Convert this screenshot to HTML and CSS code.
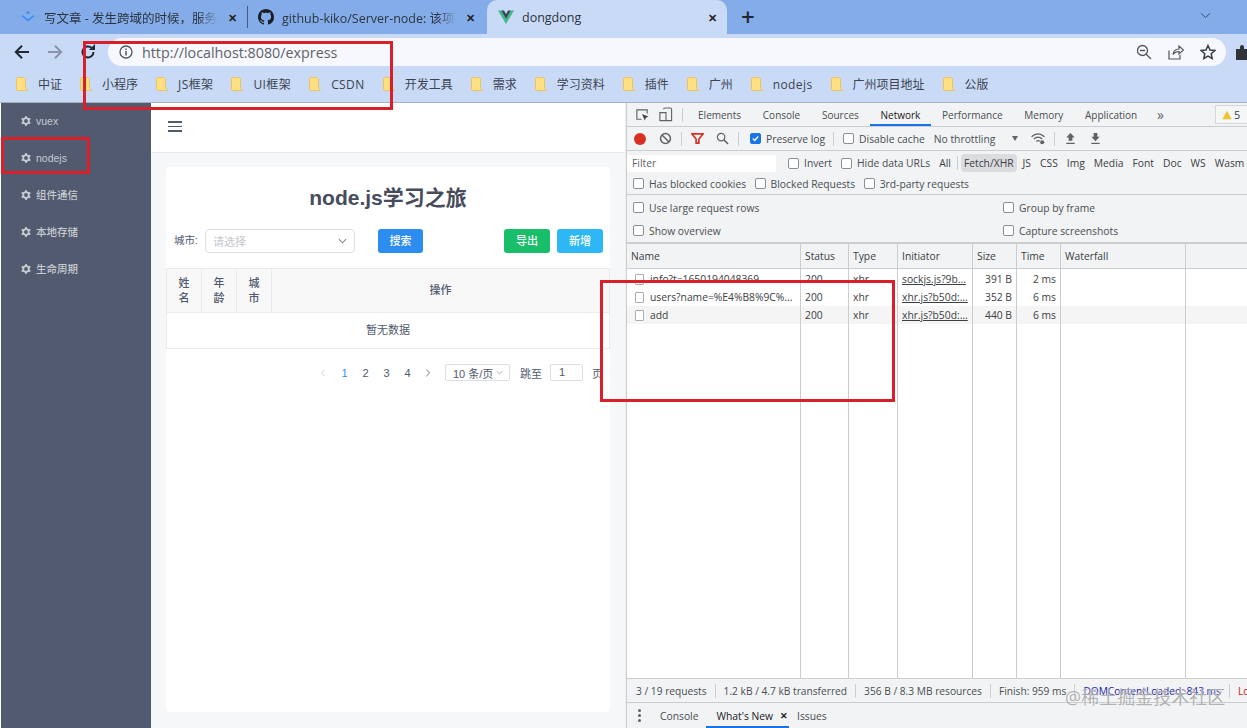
FILE: index.html
```html
<!DOCTYPE html>
<html lang="zh">
<head>
    <meta charset="UTF-8">
    <meta name="viewport" content="width=device-width, initial-scale=1.0">
    <title>dongdong</title>
    <link rel="stylesheet" href="styles.css">
</head>
<body>
    <svg class="defs" width="0" height="0">
        <symbol id="folder" viewBox="0 0 12 14">
            <path d="M.5 1.5Q.5.5 1.5.5H8L9.5 2V11L11.5 13.5H1.5Q.5 13.5.5 12.5Z" fill="#ffdf80" stroke="#e8c468"/>
        </symbol>
        <symbol id="gear" viewBox="0 0 12 12">
            <circle cx="6" cy="6" r="3.4" fill="none" stroke="#c9ccd3" stroke-width="2.2"/>
            <path d="M6 0V2.4M6 9.6V12M.8 3 2.9 4.2M9.1 7.8 11.2 9M.8 9 2.9 7.8M9.1 4.2 11.2 3" stroke="#c9ccd3" stroke-width="2"/>
        </symbol>
    </svg>

    <div class="tabstrip">
        <div class="tab tab-first">
            <svg class="favicon" viewBox="0 0 16 16"><path d="M8 2 10 3.600 8 5.200 6 3.600ZM3 6 8 10 13 6 14.400 7.200 8 12.400 1.600 7.200Z" fill="#3f8cf5"/><path d="M4.400 5 8 7.900 11.600 5 13 6.100 8 10 3 6.100Z" fill="#7fb2f7"/></svg>
            <span class="tab-title tab-fade">写文章 - 发生跨域的时候，服务器</span>
            <span class="tab-close">✕</span>
        </div>
        <div class="tab-sep"></div>
        <div class="tab tab-second">
            <svg class="favicon" viewBox="0 0 16 16"><path fill="#1b1f24" d="M8 0C3.58 0 0 3.58 0 8c0 3.54 2.29 6.53 5.47 7.59.4.07.55-.17.55-.38 0-.19-.01-.82-.01-1.49-2.01.37-2.53-.49-2.69-.94-.09-.23-.48-.94-.82-1.13-.28-.15-.68-.52-.01-.53.63-.01 1.08.58 1.23.82.72 1.21 1.87.87 2.33.66.07-.52.28-.87.51-1.07-1.78-.2-3.64-.89-3.64-3.95 0-.87.31-1.59.82-2.15-.08-.2-.36-1.02.08-2.12 0 0 .67-.21 2.2.82.64-.18 1.32-.27 2-.27s1.36.09 2 .27c1.53-1.04 2.2-.82 2.2-.82.44 1.1.16 1.92.08 2.12.51.56.82 1.27.82 2.15 0 3.07-1.87 3.75-3.65 3.95.29.25.54.73.54 1.48 0 1.07-.01 1.93-.01 2.2 0 .21.15.46.55.38A8.01 8.01 0 0 0 16 8c0-4.42-3.58-8-8-8Z"/></svg>
            <span class="tab-title tab-fade">github-kiko/Server-node: 该项</span>
            <span class="tab-close">✕</span>
        </div>
        <div class="tab tab-active">
            <svg class="favicon" viewBox="0 0 16 16"><path d="M0 1.500H3.200L8 10 12.800 1.500H16L8 15Z" fill="#41b883"/><path d="M3.200 1.500H6L8 5 10 1.500H12.800L8 10Z" fill="#35495e"/></svg>
            <span class="tab-title">dongdong</span>
            <span class="tab-close">✕</span>
        </div>
        <span class="new-tab">+</span>
        <svg class="tab-menu" viewBox="0 0 12 8"><path d="M1 1.500 6 6.500 11 1.500" fill="none" stroke="#2c3e5c" stroke-width="1"/></svg>
    </div>

    <div class="toolbar">
        <svg class="nav-icon" viewBox="0 0 16 16"><path d="M15 8H2M8 1.800 1.800 8 8 14.200" fill="none" stroke="#1f2733" stroke-width="2"/></svg>
        <svg class="nav-icon" viewBox="0 0 16 16"><path d="M1 8H14M8 1.800 14.200 8 8 14.200" fill="none" stroke="#8a94a6" stroke-width="2"/></svg>
        <svg class="nav-icon" viewBox="0 0 16 16"><path d="M13.500 8A5.500 5.500 0 1 1 11.600 3.800" fill="none" stroke="#1f2733" stroke-width="2"/><path d="M9 6H15V0Z" fill="#1f2733"/></svg>
        <div class="omnibox">
            <svg class="info-icon" viewBox="0 0 14 14"><circle cx="7" cy="7" r="6" fill="none" stroke="#50545c" stroke-width="1.300"/><path d="M7 6V10.500M7 3.400V5" stroke="#50545c" stroke-width="1.500"/></svg>
            <span class="url">http://localhost:8080/express</span>
            <div class="omni-actions">
                <svg class="omni-icon" viewBox="0 0 16 16"><circle cx="6.500" cy="6.500" r="5" fill="none" stroke="#50545c" stroke-width="1.300"/><path d="M10.200 10.200 15 15M4 6.500H9" stroke="#50545c" stroke-width="1.300"/></svg>
                <svg class="omni-icon" viewBox="0 0 16 16"><path d="M1 6.500V15H12V11M5 10.500C5.500 7 8 5 11 5V2L15.500 6 11 10V7.500C8.500 7.500 6.500 8.500 5 10.500Z" fill="none" stroke="#50545c" stroke-width="1.200"/></svg>
                <svg class="omni-icon" viewBox="0 0 16 16"><path d="M8 1.500 10 6 14.800 6.500 11.200 9.700 12.200 14.500 8 12 3.800 14.500 4.800 9.700 1.200 6.500 6 6Z" fill="none" stroke="#3a3f47" stroke-width="1.500"/></svg>
            </div>
        </div>
        <svg class="puzzle" viewBox="0 0 16 16"><path d="M1 5H5V3A2 2 0 0 1 9 3V5H13V9H15A2 2 0 0 1 15 13H13V16H1Z" fill="#30343a"/></svg>
    </div>

    <div class="bookmarks">
        <a class="bookmark"><svg class="folder"><use href="#folder"/></svg>中证</a>
        <a class="bookmark"><svg class="folder"><use href="#folder"/></svg>小程序</a>
        <a class="bookmark bookmark-latin"><svg class="folder"><use href="#folder"/></svg>JS框架</a>
        <a class="bookmark bookmark-latin"><svg class="folder"><use href="#folder"/></svg>UI框架</a>
        <a class="bookmark bookmark-latin"><svg class="folder"><use href="#folder"/></svg>CSDN</a>
        <a class="bookmark"><svg class="folder"><use href="#folder"/></svg>开发工具</a>
        <a class="bookmark"><svg class="folder"><use href="#folder"/></svg>需求</a>
        <a class="bookmark"><svg class="folder"><use href="#folder"/></svg>学习资料</a>
        <a class="bookmark"><svg class="folder"><use href="#folder"/></svg>插件</a>
        <a class="bookmark"><svg class="folder"><use href="#folder"/></svg>广州</a>
        <a class="bookmark bookmark-latin"><svg class="folder"><use href="#folder"/></svg>nodejs</a>
        <a class="bookmark"><svg class="folder"><use href="#folder"/></svg>广州项目地址</a>
        <a class="bookmark"><svg class="folder"><use href="#folder"/></svg>公版</a>
    </div>

    <div class="viewport">
        <nav class="sidebar">
            <a class="side-item"><svg class="gear"><use href="#gear"/></svg>vuex</a>
            <a class="side-item"><svg class="gear"><use href="#gear"/></svg>nodejs</a>
            <a class="side-item"><svg class="gear"><use href="#gear"/></svg>组件通信</a>
            <a class="side-item"><svg class="gear"><use href="#gear"/></svg>本地存储</a>
            <a class="side-item"><svg class="gear"><use href="#gear"/></svg>生命周期</a>
        </nav>

        <main class="app">
            <div class="app-top">
                <div class="hamburger"><i></i><i></i><i></i></div>
            </div>
            <div class="app-body">
                <div class="card">
                    <h1 class="title">node.js学习之旅</h1>
                    <div class="filters">
                        <label class="filter-label">城市:</label>
                        <div class="select">
                            <span>请选择</span>
                            <svg class="caret" viewBox="0 0 10 6"><path d="M1 1 5 5 9 1" fill="none" stroke="#808695" stroke-width="1.200"/></svg>
                        </div>
                        <button class="btn btn-search">搜索</button>
                        <button class="btn btn-export">导出</button>
                        <button class="btn btn-add">新增</button>
                    </div>
                    <div class="table">
                        <div class="th">姓<br>名</div>
                        <div class="th">年<br>龄</div>
                        <div class="th">城<br>市</div>
                        <div class="th th-last">操作</div>
                        <div class="empty">暂无数据</div>
                    </div>
                    <div class="pager">
                        <svg class="pager-arrow" viewBox="0 0 6 10"><path d="M5 1 1 5 5 9" fill="none" stroke="#c5c8ce" stroke-width="1.100"/></svg>
                        <span class="page page-on">1</span>
                        <span class="page">2</span>
                        <span class="page">3</span>
                        <span class="page">4</span>
                        <svg class="pager-arrow pager-next" viewBox="0 0 6 10"><path d="M1 1 5 5 1 9" fill="none" stroke="#666" stroke-width="1.100"/></svg>
                        <div class="page-size">10 条/页<svg class="caret-small" viewBox="0 0 10 6"><path d="M1 1 5 5 9 1" fill="none" stroke="#808695" stroke-width="1"/></svg></div>
                        <span class="jump">跳至</span>
                        <div class="jump-input">1</div>
                        <span class="jump-end">页</span>
                    </div>
                </div>
            </div>
        </main>

        <section class="devtools">
            <div class="dt-tabs">
                <svg class="dt-icon" viewBox="0 0 16 16"><path d="M7 13H2V3H13V7" fill="none" stroke="#5f6368" stroke-width="1.200"/><path d="M7.500 7.500 14.500 10.500 11.500 11.500 10.500 14.500Z" fill="#3d4043"/></svg>
                <svg class="dt-icon" viewBox="0 0 16 16"><path d="M6 2.500Q6 1 7.500 1H13Q14.500 1 14.500 2.500V14.500H6M2 6H8.500V14.500H2Z" fill="none" stroke="#5f6368" stroke-width="1.200"/></svg>
                <span class="dt-sep"></span>
                <span class="dt-tab">Elements</span>
                <span class="dt-tab">Console</span>
                <span class="dt-tab">Sources</span>
                <span class="dt-tab dt-tab-on">Network</span>
                <span class="dt-tab">Performance</span>
                <span class="dt-tab">Memory</span>
                <span class="dt-tab">Application</span>
                <span class="dt-more">»</span>
                <span class="dt-badge"><svg class="warn" viewBox="0 0 12 12"><path d="M6 1 11.500 11H.5Z" fill="#f4c430"/></svg>5</span>
            </div>

            <div class="dt-row dt-actions">
                <span class="rec"></span>
                <svg class="dt-icon-sm" viewBox="0 0 14 14"><circle cx="7" cy="7" r="5.300" fill="none" stroke="#5f6368" stroke-width="1.600"/><path d="M3.300 3.300 10.700 10.700" stroke="#5f6368" stroke-width="1.600"/></svg>
                <span class="dt-sep"></span>
                <svg class="dt-icon-sm" viewBox="0 0 14 14"><path d="M1 2H13L8.500 7.500V12H5.500V7.500Z" fill="none" stroke="#d93025" stroke-width="1.800"/></svg>
                <svg class="dt-icon-sm" viewBox="0 0 14 14"><circle cx="5.500" cy="5.500" r="4" fill="none" stroke="#5f6368" stroke-width="1.300"/><path d="M8.500 8.500 13 13" stroke="#5f6368" stroke-width="1.600"/></svg>
                <span class="dt-sep"></span>
                <label class="chk chk-preserve"><i class="box box-on"><svg viewBox="0 0 10 10"><path d="M2 5 4.200 7.200 8 2.800" fill="none" stroke="#fff" stroke-width="1.500"/></svg></i>Preserve log</label>
                <span class="dt-sep"></span>
                <label class="chk"><i class="box"></i>Disable cache</label>
                <span class="throttle">No throttling</span>
                <span class="throttle-arrow"></span>
                <svg class="dt-icon-sm wifi" viewBox="0 0 16 14"><path d="M1 5Q8-1 15 5M3.500 7.500Q8 3.500 12.500 7.500M6 10Q8 8.500 10 10" fill="none" stroke="#5f6368" stroke-width="1.400"/><circle cx="12.500" cy="11" r="2.200" fill="#5f6368"/></svg>
                <span class="dt-sep"></span>
                <svg class="dt-icon-sm" viewBox="0 0 12 14"><path d="M6 1 10.500 6H8V9.500H4V6H1.500ZM1.500 11.500H10.500V13H1.500Z" fill="#5f6368"/></svg>
                <svg class="dt-icon-sm" viewBox="0 0 12 14"><path d="M4 1H8V5H10.500L6 10 1.500 5H4ZM1.500 11.500H10.500V13H1.500Z" fill="#5f6368"/></svg>
            </div>

            <div class="dt-row dt-filter">
                <span class="filter-input">Filter</span>
                <label class="chk"><i class="box"></i>Invert</label>
                <label class="chk"><i class="box"></i>Hide data URLs</label>
                <span class="ftype ftype-all">All</span>
                <span class="dt-sep"></span>
                <span class="ftype ftype-on">Fetch/XHR</span>
                <span class="ftype">JS</span>
                <span class="ftype">CSS</span>
                <span class="ftype">Img</span>
                <span class="ftype">Media</span>
                <span class="ftype">Font</span>
                <span class="ftype">Doc</span>
                <span class="ftype">WS</span>
                <span class="ftype">Wasm</span>
            </div>

            <div class="dt-row dt-blocked">
                <label class="chk"><i class="box"></i>Has blocked cookies</label>
                <label class="chk"><i class="box"></i>Blocked Requests</label>
                <label class="chk"><i class="box"></i>3rd-party requests</label>
            </div>

            <div class="dt-settings">
                <label class="chk"><i class="box"></i>Use large request rows</label>
                <label class="chk"><i class="box"></i>Group by frame</label>
                <label class="chk"><i class="box"></i>Show overview</label>
                <label class="chk"><i class="box"></i>Capture screenshots</label>
            </div>

            <div class="net">
                <div class="net-row net-head">
                    <span class="c-name">Name</span>
                    <span class="c-status">Status</span>
                    <span class="c-type">Type</span>
                    <span class="c-init">Initiator</span>
                    <span class="c-size c-left">Size</span>
                    <span class="c-time c-left">Time</span>
                    <span class="c-fall">Waterfall</span>
                </div>
                <div class="net-row net-first">
                    <span class="c-name"><i class="file"></i>info?t=1650194048369</span>
                    <span class="c-status">200</span>
                    <span class="c-type">xhr</span>
                    <span class="c-init link">sockjs.js?9b...</span>
                    <span class="c-size">391 B</span>
                    <span class="c-time">2 ms</span>
                    <span class="c-fall"></span>
                </div>
                <div class="net-row net-white">
                    <span class="c-name"><i class="file"></i>users?name=%E4%B8%9C%...</span>
                    <span class="c-status">200</span>
                    <span class="c-type">xhr</span>
                    <span class="c-init link">xhr.js?b50d:...</span>
                    <span class="c-size">352 B</span>
                    <span class="c-time">6 ms</span>
                    <span class="c-fall"></span>
                </div>
                <div class="net-row">
                    <span class="c-name"><i class="file"></i>add</span>
                    <span class="c-status">200</span>
                    <span class="c-type">xhr</span>
                    <span class="c-init link">xhr.js?b50d:...</span>
                    <span class="c-size">440 B</span>
                    <span class="c-time">6 ms</span>
                    <span class="c-fall"></span>
                </div>
                <div class="net-row net-fill">
                    <span class="c-name"></span>
                    <span class="c-status"></span>
                    <span class="c-type"></span>
                    <span class="c-init"></span>
                    <span class="c-size"></span>
                    <span class="c-time"></span>
                    <span class="c-fall"></span>
                </div>
            </div>

            <div class="dt-status">
                <span>3 / 19 requests</span>
                <span>1.2 kB / 4.7 kB transferred</span>
                <span>356 B / 8.3 MB resources</span>
                <span>Finish: 959 ms</span>
                <span class="st-blue">DOMContentLoaded: 843 ms</span>
                <span class="st-red">Lo</span>
            </div>

            <div class="dt-drawer">
                <span class="kebab"><i></i><i></i><i></i></span>
                <span class="dr-tab">Console</span>
                <span class="dr-tab dr-tab-on">What's New <b class="dr-x">✕</b></span>
                <span class="dr-tab">Issues</span>
            </div>
        </section>
    </div>

    <!-- red marks drawn over the screenshot, and the site watermark -->
    <div class="mark mark-url"></div>
    <div class="mark mark-side"></div>
    <div class="mark mark-net"></div>
    <div class="watermark">@稀土掘金技术社区</div>
</body>
</html>
```

FILE: styles.css
```css
* {
    box-sizing: border-box;
}
html, body {
    margin: 0;
    height: 728px;
    overflow: hidden;
}
body {
    position: relative;
    font-family: "Open Sans", "Noto Sans CJK SC", sans-serif;
    background: #c9daf6;
    color: #333;
}
.defs {
    position: absolute;
}

/* browser chrome */
.tabstrip {
    display: flex;
    align-items: flex-end;
    height: 34px;
    background: #84ace8;
}
.tab {
    display: flex;
    align-items: center;
    width: 238px;
    height: 34px;
    padding: 0 9px 0 10px;
    font-size: 12.5px;
    color: #2c3440;
}
.tab-first {
    width: 247px;
    padding-left: 20px;
    padding-right: 8px;
}
.tab-sep {
    width: 1px;
    height: 22px;
    margin-bottom: 6px;
    background: #46597a;
}
.tab-active {
    width: 240px;
    height: 37px;
    margin-bottom: -3px;
    padding: 0 8px 3px 11px;
    margin-left: 1px;
    background: #c9daf6;
    border-radius: 10px 10px 0 0;
}
.favicon {
    flex: none;
    width: 16px;
    height: 16px;
    margin-right: 8px;
}
.tab-title {
    flex: 1;
    overflow: hidden;
    white-space: nowrap;
}
.tab-fade {
    -webkit-mask-image: linear-gradient(to right, #000 88%, transparent);
    mask-image: linear-gradient(to right, #000 88%, transparent);
}
.tab-close {
    flex: none;
    width: 14px;
    margin-left: 6px;
    font-size: 11px;
    font-weight: 700;
    color: #222;
    text-align: center;
}
.new-tab {
    align-self: center;
    margin-left: 14px;
    font-size: 24px;
    line-height: 24px;
    font-weight: 600;
    color: #1f2733;
}
.tab-menu {
    align-self: center;
    width: 11px;
    height: 7px;
    margin-left: auto;
    margin-right: 36px;
    margin-bottom: 4px;
}

.toolbar {
    display: flex;
    align-items: center;
    height: 32px;
    padding: 4px 0 0 14px;
    background: #c9daf6;
}
.nav-icon {
    flex: none;
    width: 16px;
    height: 16px;
    margin-right: 17px;
}
.omnibox {
    flex: none;
    display: flex;
    align-items: center;
    width: 1118px;
    height: 28px;
    margin-left: -5px;
    padding: 0 10px 0 11px;
    background: #f6f8fe;
    border-radius: 14px;
}
.info-icon {
    width: 14px;
    height: 14px;
    margin-right: 9px;
}
.url {
    font-size: 14.3px;
    color: #5f6368;
}
.omni-actions {
    display: flex;
    gap: 16px;
    margin-left: auto;
}
.omni-icon {
    width: 16px;
    height: 16px;
}
.puzzle {
    flex: none;
    width: 16px;
    height: 16px;
    margin-left: 9px;
}

.bookmarks {
    display: flex;
    align-items: center;
    gap: 18px;
    height: 37px;
    padding-left: 16px;
    background: #c9daf6;
    border-bottom: 1px solid #a7afbc;
}
.bookmark {
    display: flex;
    align-items: center;
    gap: 10px;
    font-size: 12px;
    color: #3b4250;
    white-space: nowrap;
}
.bookmark-latin {
    letter-spacing: 0.4px;
}
.folder {
    width: 12px;
    height: 14px;
}

/* page + devtools */
.viewport {
    display: flex;
    height: 625px;
    padding-left: 1px;
    background: #fff;
}
.sidebar {
    flex: none;
    width: 150px;
    background: #515a6e;
}
.side-item {
    display: flex;
    align-items: center;
    gap: 5px;
    height: 36.8px;
    padding-left: 20px;
    font-family: "Liberation Sans", "Noto Sans CJK SC", sans-serif;
    font-size: 10.5px;
    font-weight: 500;
    color: #c7cad1;
}
.gear {
    width: 10px;
    height: 10px;
}
.app {
    flex: none;
    width: 475px;
    display: flex;
    flex-direction: column;
    font-family: "Liberation Sans", "Noto Sans CJK SC", sans-serif;
    background: #f5f7f9;
    border-right: 1px solid #f0f0f0;
}
.app-top {
    display: flex;
    align-items: center;
    height: 50px;
    padding: 0 0 2px 17px;
    background: #fff;
    border-bottom: 1px solid #e8eaec;
}
.hamburger {
    display: flex;
    flex-direction: column;
    gap: 3px;
}
.hamburger i {
    width: 14px;
    height: 1.5px;
    background: #515a6e;
}
.app-body {
    flex: 1;
    padding: 14px 15px 16px 15px;
}
.card {
    height: 100%;
    background: #fff;
    border-radius: 4px;
}
.title {
    margin: 0;
    padding-top: 18px;
    font-size: 21px;
    line-height: 26px;
    font-weight: 700;
    text-align: center;
    color: #464c5b;
}
.filters {
    display: flex;
    align-items: center;
    height: 24px;
    margin-top: 18px;
    padding: 0 7px 0 8px;
}
.filter-label {
    width: 31px;
    margin-bottom: 3px;
    font-size: 10.5px;
    color: #515a6e;
}
.select {
    display: flex;
    align-items: center;
    justify-content: space-between;
    width: 150px;
    height: 24px;
    padding: 0 7px;
    font-size: 11px;
    color: #c5c8ce;
    border: 1px solid #dcdee2;
    border-radius: 4px;
}
.caret {
    width: 9px;
    height: 6px;
}
.btn {
    height: 24px;
    padding: 0 0 2px;
    font-family: inherit;
    font-size: 11px;
    font-weight: 500;
    color: #fff;
    border: none;
    border-radius: 3px;
}
.btn-search {
    width: 45px;
    margin-left: 23px;
    margin-right: auto;
    background: #2d8cf0;
}
.btn-export {
    width: 46px;
    background: #19be6b;
}
.btn-add {
    width: 46px;
    margin-left: 7px;
    background: #2db7f5;
}
.table {
    display: grid;
    grid-template-columns: 35px 35px 35px 1fr;
    margin-top: 15px;
    border: 1px solid #e8eaec;
    font-size: 11px;
    color: #515a6e;
}
.th {
    display: flex;
    align-items: center;
    justify-content: center;
    height: 44px;
    line-height: 15px;
    text-align: center;
    font-weight: 500;
    background: #f8f8f9;
    border-right: 1px solid #e8eaec;
    border-bottom: 1px solid #e8eaec;
}
.th-last {
    border-right: none;
}
.empty {
    grid-column: 1 / -1;
    height: 35px;
    line-height: 35px;
    text-align: center;
}
.pager {
    display: flex;
    align-items: center;
    height: 17px;
    margin-top: 15px;
    padding-left: 154px;
    font-size: 11px;
    color: #515a6e;
    white-space: nowrap;
}
.pager-arrow {
    width: 6px;
    height: 8px;
}
.page {
    width: 21px;
    text-align: center;
}
.page-on {
    margin-left: 8px;
    color: #2d8cf0;
}
.pager-next {
    margin-left: 7px;
}
.page-size {
    display: flex;
    align-items: center;
    gap: 3px;
    width: 65px;
    height: 17px;
    margin-left: 14px;
    padding-left: 7px;
    border: 1px solid #dcdee2;
    border-radius: 2px;
}
.caret-small {
    width: 7px;
    height: 5px;
}
.jump {
    margin-left: 10px;
}
.jump-input {
    width: 33px;
    height: 17px;
    margin-left: 8px;
    padding-left: 8px;
    line-height: 15px;
    border: 1px solid #dcdee2;
    border-radius: 2px;
}
.jump-end {
    margin-left: 9px;
}

/* devtools */
.devtools {
    flex: none;
    display: flex;
    flex-direction: column;
    width: 621px;
    height: 625px;
    overflow: hidden;
    background: #f1f3f4;
    border-left: 1px solid #cbcdd1;
    font-size: 10.3px;
    color: #3c4043;
    white-space: nowrap;
}
.dt-tabs {
    display: flex;
    align-items: center;
    height: 24px;
    padding-left: 8px;
    border-bottom: 1px solid #cbcdd1;
    font-size: 10px;
}
.dt-icon {
    flex: none;
    width: 15px;
    height: 15px;
    margin-right: 8px;
}
.dt-sep {
    flex: none;
    width: 1px;
    height: 14px;
    margin: 0 4.2px 0 1px;
    background: #cbcdd1;
}
.dt-tab {
    display: flex;
    align-items: center;
    height: 23px;
    padding: 0 10.87px;
    color: #4a4e52;
}
.dt-tab-on {
    color: #202124;
    box-shadow: inset 0 -2px 0 #1a73e8;
}
.dt-more {
    margin-left: 9px;
    font-size: 14px;
    line-height: 14px;
    color: #5f6368;
}
.dt-badge {
    display: flex;
    align-items: center;
    gap: 2px;
    flex: none;
    width: 36px;
    height: 19px;
    margin-left: auto;
    margin-right: -4px;
    padding-left: 6px;
    background: #f4f6f7;
    border: 1px solid #d5d7da;
    font-size: 11px;
}
.warn {
    width: 10px;
    height: 10px;
}
.dt-row {
    display: flex;
    align-items: center;
    padding-left: 7px;
}
.dt-actions {
    height: 24px;
    border-bottom: 1px solid #cbcdd1;
}
.rec {
    flex: none;
    width: 12px;
    height: 12px;
    margin-right: 13px;
    background: #d93025;
    border-radius: 50%;
}
.dt-icon-sm {
    flex: none;
    width: 13px;
    height: 13px;
    margin-right: 12px;
}
.dt-actions .dt-sep {
    margin: 0 9px 0 -3px;
}
.chk {
    display: flex;
    align-items: center;
    gap: 5px;
    color: #4a4e52;
}
.box {
    flex: none;
    display: block;
    width: 11px;
    height: 11px;
    background: #fff;
    border: 1px solid #8a8f95;
    border-radius: 2px;
}
.box-on {
    background: #1a73e8;
    border-color: #1a73e8;
}
.box-on svg {
    display: block;
    width: 9px;
    height: 9px;
}
.dt-actions .chk {
    margin-right: 11px;
}
.dt-actions .chk-preserve {
    margin-left: 2px;
}
.throttle {
    margin-left: -2px;
    color: #4a4e52;
}
.throttle-arrow {
    width: 0;
    height: 0;
    margin: 0 12px 0 17px;
    border-left: 3.5px solid transparent;
    border-right: 3.5px solid transparent;
    border-top: 5px solid #5f6368;
}
.wifi {
    width: 16px;
    margin-right: 11px;
}
.dt-filter {
    height: 22px;
    padding-left: 0;
    padding-top: 2px;
}
.filter-input {
    flex: none;
    width: 149px;
    height: 17px;
    margin-right: 12px;
    padding-left: 5px;
    line-height: 17px;
    background: #fff;
    color: #5f6368;
}
.dt-filter .chk {
    margin-right: 9px;
}
.ftype {
    margin-right: 9px;
}
.ftype-all {
    margin-right: 6px;
}
.dt-filter .dt-sep {
    margin: 0 3px 0 0;
}
.ftype-on {
    margin-right: 6px;
    padding: 2px 3px;
    background: #dadce0;
    border-radius: 4px;
}
.dt-blocked {
    gap: 8.5px;
    height: 22px;
    padding-left: 6px;
    border-bottom: 1px solid #cbcdd1;
}
.dt-settings {
    display: grid;
    grid-template-columns: 370px 1fr;
    grid-auto-rows: 23px;
    align-items: center;
    height: 49px;
    padding: 1px 0 0 6px;
    border-bottom: 2px solid #cbcdd1;
}
.net {
    flex: 1;
    display: flex;
    flex-direction: column;
    background: #fff;
}
.net-row {
    display: flex;
    flex: none;
    height: 18px;
    line-height: 18px;
    background: #f5f5f5;
}
.net-row > span {
    flex: none;
    height: 100%;
    padding: 0 4px;
    overflow: hidden;
    border-right: 1px solid #cbcdd1;
}
.net-white {
    background: #fff;
}
.net-first {
    height: 19px;
    line-height: 20px;
    background: #fff;
}
.net-head {
    height: 25px;
    line-height: 24px;
    background: #f1f3f4;
    border-bottom: 1px solid #cbcdd1;
}
.net-fill {
    flex: 1;
    background: #fff;
}
.net-row > .c-name {
    width: 174px;
}
.c-status {
    width: 48px;
}
.c-type {
    width: 49px;
}
.c-init {
    width: 75px;
}
.c-size {
    width: 44px;
    text-align: right;
}
.c-time {
    width: 44px;
    text-align: right;
}
.c-left {
    text-align: left;
}
.net-row > .c-fall {
    width: 125px;
}
.file {
    display: inline-block;
    width: 9px;
    height: 11px;
    margin: 0 6px 0 4px;
    vertical-align: -2px;
    background: #fff;
    border: 1px solid #a8acb1;
    border-radius: 1px;
}
.link {
    text-decoration: underline;
}
.dt-status {
    display: flex;
    align-items: center;
    flex: none;
    height: 25px;
    padding-left: 9px;
    border-top: 1px solid #cbcdd1;
    border-bottom: 1px solid #cbcdd1;
    font-size: 10.2px;
    color: #4a4e52;
}
.dt-status span {
    padding-right: 8px;
    margin-right: 8px;
    border-right: 1px solid #cbcdd1;
}
.dt-status .st-blue {
    color: #1a1ab0;
}
.dt-status .st-red {
    border-right: none;
    color: #c5221f;
}
.dt-drawer {
    display: flex;
    align-items: stretch;
    flex: none;
    height: 25px;
    padding-left: 11px;
}
.kebab {
    display: flex;
    flex-direction: column;
    justify-content: center;
    gap: 2px;
    margin-right: 11px;
}
.kebab i {
    width: 3px;
    height: 3px;
    background: #5f6368;
    border-radius: 50%;
}
.dr-tab {
    display: flex;
    align-items: center;
    gap: 4px;
    padding: 0 8px;
    color: #4a4e52;
}
.dr-tab-on {
    padding: 0 1px 0 10px;
    color: #202124;
    box-shadow: inset 0 -2px 0 #1a73e8;
}
.dr-x {
    margin-left: 3px;
    font-size: 9px;
}

/* overlays */
.mark {
    position: absolute;
    border: 3px solid #d9202a;
}
.mark-url {
    left: 83px;
    top: 41px;
    width: 310px;
    height: 69px;
}
.mark-side {
    left: 1px;
    top: 137px;
    width: 89px;
    height: 37px;
}
.mark-net {
    left: 600px;
    top: 280px;
    width: 295px;
    height: 122px;
}
.watermark {
    position: absolute;
    left: 1065px;
    top: 685px;
    font-size: 18px;
    line-height: 24px;
    color: rgba(110, 110, 110, 0.55);
    text-shadow: 0 0 1px #fff;
    white-space: nowrap;
}
```
